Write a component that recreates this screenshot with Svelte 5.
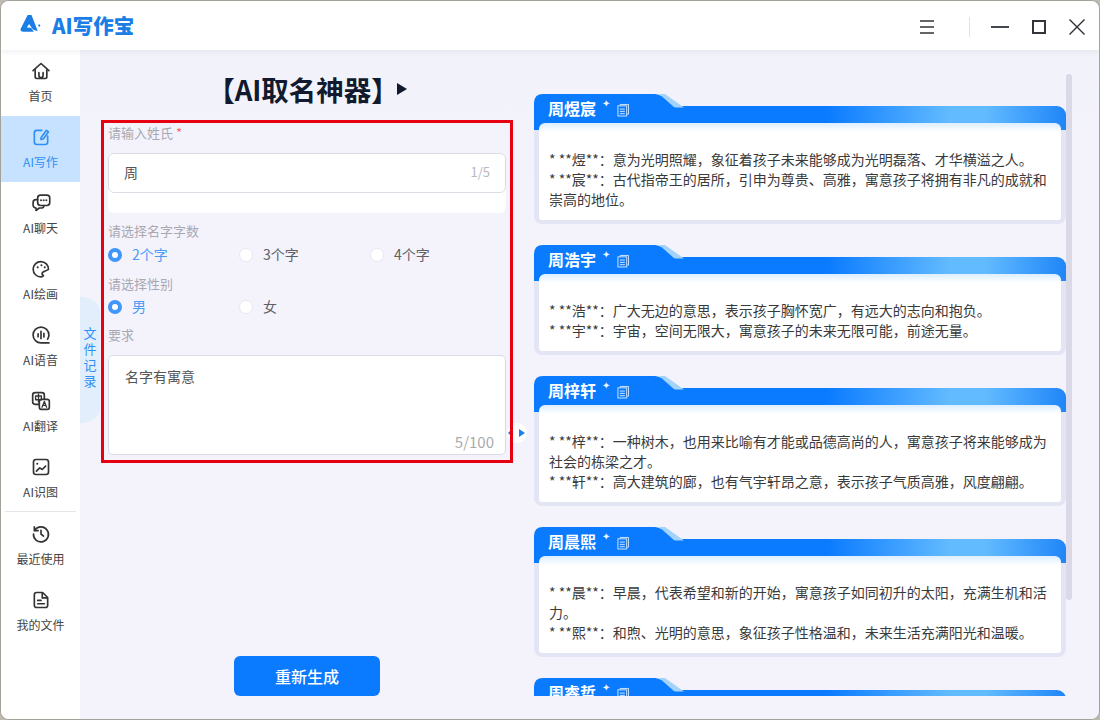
<script>
  const nav = [
    { id: 'home', label: '首页' },
    { id: 'edit', label: 'AI写作', active: true },
    { id: 'chat', label: 'AI聊天' },
    { id: 'paint', label: 'AI绘画' },
    { id: 'voice', label: 'AI语音' },
    { id: 'trans', label: 'AI翻译' },
    { id: 'image', label: 'AI识图' }
  ];
  const nav2 = [
    { id: 'history', label: '最近使用' },
    { id: 'file', label: '我的文件' }
  ];
  const counts = [
    { label: '2个字', on: true },
    { label: '3个字' },
    { label: '4个字' }
  ];
  const genders = [{ label: '男', on: true }, { label: '女' }];
  const cards = [
    { name: '周煜宸', lines: ['* **煜**：意为光明照耀，象征着孩子未来能够成为光明磊落、才华横溢之人。', '* **宸**：古代指帝王的居所，引申为尊贵、高雅，寓意孩子将拥有非凡的成就和崇高的地位。'] },
    { name: '周浩宇', lines: ['* **浩**：广大无边的意思，表示孩子胸怀宽广，有远大的志向和抱负。', '* **宇**：宇宙，空间无限大，寓意孩子的未来无限可能，前途无量。'] },
    { name: '周梓轩', lines: ['* **梓**：一种树木，也用来比喻有才能或品德高尚的人，寓意孩子将来能够成为社会的栋梁之才。', '* **轩**：高大建筑的廊，也有气宇轩昂之意，表示孩子气质高雅，风度翩翩。'] },
    { name: '周晨熙', lines: ['* **晨**：早晨，代表希望和新的开始，寓意孩子如同初升的太阳，充满生机和活力。', '* **熙**：和煦、光明的意思，象征孩子性格温和，未来生活充满阳光和温暖。'] },
    { name: '周睿哲', lines: ['* **睿**：聪明睿智，寓意孩子智慧过人。', '* **哲**：有智慧的人，寓意孩子明理通达。'] }
  ];
</script>

{#snippet icon(id)}
  <svg class="nav-icon" viewBox="0 0 24 24" fill="none" stroke="currentColor" stroke-width="2" stroke-linecap="round" stroke-linejoin="round">
    {#if id === 'home'}
      <path d="M2.500 11.500 12 3l9.500 8.500" />
      <path d="M5 10.500V19a2 2 0 0 0 2 2h10a2 2 0 0 0 2-2v-8.500" />
      <path d="M9.500 14v3.500a2.500 2.500 0 0 0 5 0V14" />
    {:else if id === 'edit'}
      <path d="M13 4H7a3 3 0 0 0-3 3v11a3 3 0 0 0 3 3h10a3 3 0 0 0 3-3v-7" />
      <path d="m12 13 6.500-9 2.500 1.800L15 14l-3 1z" />
    {:else if id === 'chat'}
      <rect x="8" y="2.500" width="14.500" height="12.500" rx="3.500" />
      <path d="M8 8H6a3.500 3.500 0 0 0-3.500 3.500v3A3.500 3.500 0 0 0 6 18v3l4-3h3a3 3 0 0 0 2.500-3" />
      <path d="M12 8.800h.01M15.200 8.800h.01M18.400 8.800h.01" stroke-width="2.400" />
    {:else if id === 'paint'}
      <path d="M21 12.500A9.200 9.200 0 1 0 12 21.500c1.500 0 2.500-.6 3-1.500-1.500-1-2.500-2.500-1-4 1.500-1.400 4.500-1.700 7-3.500z" />
      <path d="M8 10h.01M12.500 7.500h.01M16.500 10h.01" stroke-width="2.500" />
    {:else if id === 'voice'}
      <path d="M21.500 21.500H12A9.500 9.500 0 1 1 21.500 12c0 2-.6 3.500-1.500 5" />
      <path d="M8.500 10.500v3.500M12 7.500v9M15.500 10v4.500" />
    {:else if id === 'trans'}
      <rect x="2" y="2" width="14" height="14" rx="3" />
      <rect x="10" y="10" width="12" height="12" rx="2.500" fill="#fff" />
      <path d="M5.500 6h7v4.500h-7zM9 3.800v9.500" stroke-width="1.600" />
      <path d="m13.200 19.500 2.800-7 2.800 7M14.200 17.300h3.600" stroke-width="1.500" />
    {:else if id === 'image'}
      <rect x="3" y="3" width="18" height="18" rx="3" />
      <path d="m6.500 17 4-4 3 2 4-4" />
      <path d="M7.500 8h.01" stroke-width="2.500" />
    {:else if id === 'history'}
      <path d="M4.500 7.500A9 9 0 1 1 3 12" />
      <path d="M4 3.500v4.500h4.500" />
      <path d="M12 7.500V12l3 2.500" />
    {:else if id === 'file'}
      <path d="M14 3H6.500A2.500 2.500 0 0 0 4 5.500v13A2.500 2.500 0 0 0 6.500 21h11a2.500 2.500 0 0 0 2.500-2.500V9z" />
      <path d="M13.500 3.500V9.500H19.500" />
      <path d="M8 12.500h4M8 16.500h8" />
    {/if}
  </svg>
{/snippet}

{#snippet navItem(item)}
  <div class="nav-item" class:active={item.active}>
    {@render icon(item.id)}
    <span>{item.label}</span>
  </div>
{/snippet}

{#snippet radios(list)}
  <div class="radios">
    {#each list as r}
      <div class="radio" class:on={r.on}><i></i><span>{r.label}</span></div>
    {/each}
  </div>
{/snippet}

<div class="window">
  <header class="topbar">
    <div class="brand">
      <svg class="logo" viewBox="0 0 22 22">
        <path fill="#1a7ee6" d="M8 1h4l6.500 16.500c-2.500.5-4.500-.5-6-2.500L9.500 10.500 7 14.500c1.800-.8 3.600-.6 5 .5l2.500 3.500H3.500C1 18.500-.2 17 1 15z" />
        <path fill="#1a7ee6" d="M20 10.500l1.500 1.500-1.500 1.500-1-1.500z" />
      </svg>
      <span class="brand-name">AI写作宝</span>
    </div>
    <div class="win-ctrl">
      <svg class="ctl menu" viewBox="0 0 14 14" stroke="#333" stroke-width="1.500"><path d="M0 1h14M0 7h14M0 13h14" /></svg>
      <i class="sep"></i>
      <svg class="ctl min" viewBox="0 0 18 2" stroke="#44464f" stroke-width="2"><path d="M0 1h18" /></svg>
      <svg class="ctl max" viewBox="0 0 14 14" fill="none" stroke="#33353c" stroke-width="2"><rect x="1" y="1" width="12" height="12" /></svg>
      <svg class="ctl close" viewBox="0 0 16 16" stroke="#2c2e33" stroke-width="1.400"><path d="M0.500 0.500l15 15M15.500 0.500l-15 15" /></svg>
    </div>
  </header>

  <div class="content">
    <aside class="sidebar">
      {#each nav as item}{@render navItem(item)}{/each}
      <div class="divider"></div>
      {#each nav2 as item}{@render navItem(item)}{/each}
    </aside>

    <main class="main">
      <div class="file-tab"><span>文</span><span>件</span><span>记</span><span>录</span></div>

      <section class="left">
        <h1 class="title">【AI取名神器】<i class="tri"></i></h1>
        <div class="toggle"><i class="tl"></i><i class="tr"></i></div>
        <div class="form">
          <div class="label">请输入姓氏 <b>*</b></div>
          <div class="input-wrap">
            <div class="input"><span>周</span><em>1/5</em></div>
          </div>
          <div class="label l2">请选择名字字数</div>
          {@render radios(counts)}
          <div class="label l3">请选择性别</div>
          {@render radios(genders)}
          <div class="label l4">要求</div>
          <div class="textarea"><span>名字有寓意</span><em>5/100</em></div>
        </div>
        <button class="regen">重新生成</button>
      </section>

      <section class="results">
        {#each cards as c}
          <article class="card">
            <div class="head">
              <svg class="tab" viewBox="0 0 150 14">
                <path fill="#a3d3fb" d="M125 0h6l19 13.500h-11z" />
                <path fill="#0a7bff" d="M0 14V9q0-9 9-9h112q4 0 7 2.500L141 14z" />
              </svg>
              <span class="name">{c.name}</span>
              <span class="spark">✦</span>
              <svg class="doc" viewBox="0 0 13 14" fill="none" stroke="#d7ebff" stroke-width="1"><path d="M3.500 2.500V1h9v10.500H11" /><rect x="1" y="2.500" width="9.500" height="11" /><path d="M3 6h5.500M3 8.500h5.500M3 11h5.500" /></svg>
            </div>
            <div class="body">
              {#each c.lines as l}<p>{l}</p>{/each}
            </div>
          </article>
        {/each}
      </section>
      <div class="scrollbar"></div>
    </main>
  </div>
</div>

<style>
  :global(body) {
    margin: 0;
    background: #bdb9af;
    font-family: "Noto Sans CJK SC", "Noto Sans", sans-serif;
  }
  .window {
    width: 1100px;
    height: 720px;
    box-sizing: border-box;
    border: 1px solid #a2a29a;
    border-radius: 9px;
    overflow: hidden;
    display: flex;
    flex-direction: column;
    background: #f3f2fb;
  }
  .topbar {
    height: 49px;
    flex: none;
    display: flex;
    align-items: center;
    justify-content: space-between;
    background: #fff;
    box-shadow: 0 2px 5px rgba(60, 60, 90, 0.07);
    position: relative;
    z-index: 2;
  }
  .brand {
    display: flex;
    align-items: center;
    gap: 11px;
    padding-left: 19px;
  }
  .logo { width: 21px; height: 21px; margin-top: -3px; }
  .brand-name {
    font-size: 20.500px;
    font-weight: 900;
    color: #1a7ee6;
    margin-top: -1px;
  }
  .win-ctrl {
    display: flex;
    align-items: center;
    padding-right: 14px;
    margin-top: 3px;
  }
  .ctl { display: block; }
  .menu { width: 14px; height: 14px; margin-right: 35px; }
  .sep { width: 1px; height: 20px; background: #e2e2e6; margin-right: 21px; }
  .min { width: 18px; height: 2px; margin-right: 23px; }
  .max { width: 14px; height: 14px; margin-right: 23px; }
  .close { width: 16px; height: 16px; }

  .content { flex: 1; display: flex; min-height: 0; }
  .sidebar {
    width: 79px;
    flex: none;
    background: #fff;
    display: flex;
    flex-direction: column;
  }
  .nav-item {
    height: 66px;
    flex: none;
    display: flex;
    flex-direction: column;
    align-items: center;
    padding-top: 11px;
    box-sizing: border-box;
    color: #333;
    font-size: 12px;
    line-height: 18px;
  }
  .nav-item span { margin-top: 6px; color: #444; }
  .nav-item.active { background: #c6e2ff; color: #2e90f5; }
  .nav-item.active span { color: #2e90f5; }
  .nav-icon { width: 20px; height: 20px; }
  .divider {
    height: 1px;
    background: #e6e6ea;
    margin: -1px 4px 1px;
    flex: none;
  }

  .main {
    flex: 1;
    display: flex;
    position: relative;
    min-width: 0;
    padding-left: 21px;
    background: linear-gradient(180deg, #f2f2fa 0, #f4f3fc 120px);
  }
  .file-tab {
    position: absolute;
    left: 0;
    top: 247px;
    width: 20px;
    height: 126px;
    border-radius: 0 20px 20px 0 / 0 14px 14px 0;
    background: #e2eefb;
    display: flex;
    flex-direction: column;
    align-items: center;
    color: #2e90f5;
    font-size: 13px;
    line-height: 16px;
    padding-top: 28px;
    box-sizing: border-box;
  }

  .left {
    width: 412px;
    flex: none;
    display: flex;
    flex-direction: column;
    position: relative;
    padding-bottom: 23px;
    box-sizing: border-box;
  }
  .title {
    height: 70px;
    margin: 0;
    display: flex;
    align-items: center;
    justify-content: center;
    font-size: 27.500px;
    font-weight: 700;
    color: #111a2e;
    padding-top: 8px;
    box-sizing: border-box;
  }
  .tri {
    width: 0;
    height: 0;
    margin-left: -2px;
    border-left: 10px solid #111a2e;
    border-top: 6.500px solid transparent;
    border-bottom: 6.500px solid transparent;
  }
  .form {
    border: 3px solid #e60012;
    padding: 0 4px 5px;
    height: 343px;
    box-sizing: border-box;
    position: relative;
  }
  .label {
    font-size: 13px;
    line-height: 20px;
    color: #a8a8b2;
  }
  .label b { color: #f56c6c; font-weight: 400; }
  .l2 { margin-top: 8px; }
  .l3 { margin-top: 9px; }
  .l4 { margin-top: 8px; }
  .input-wrap {
    margin-top: 10px;
    height: 60px;
    background: #fff;
    border-radius: 6px;
  }
  .input {
    height: 40px;
    box-sizing: border-box;
    border: 1px solid #dcdce4;
    border-radius: 6px;
    display: flex;
    align-items: center;
    justify-content: space-between;
    padding: 0 15px;
    font-size: 14px;
    line-height: 20px;
    color: #555;
  }
  .input span, .input em { margin-top: -2px; }
  .input em {
    font-style: normal;
    font-size: 13px;
    color: #b8b8c0;
  }
  .radios {
    display: flex;
    margin-top: 4px;
    height: 20px;
  }
  .l3 + .radios { margin-top: 3px; }
  .radio {
    width: 131px;
    display: flex;
    align-items: center;
    gap: 10px;
    font-size: 14px;
    line-height: 20px;
    color: #606066;
  }
  .radio span { margin-top: -2px; }
  .radio i {
    width: 14px;
    height: 14px;
    box-sizing: border-box;
    border-radius: 50%;
    background: #fff;
    border: 1px solid #e8e8f0;
  }
  .radio.on { color: #4a9bf5; }
  .radio.on i { border: 4.500px solid #3f96fb; }
  .textarea {
    margin-top: 10px;
    height: 100px;
    box-sizing: border-box;
    background: #fff;
    border: 1px solid #dcdce8;
    border-radius: 5px;
    padding: 10px 16px;
    font-size: 14px;
    color: #555;
    position: relative;
    line-height: 20px;
  }
  .textarea em {
    position: absolute;
    right: 11px;
    bottom: 2px;
    font-style: normal;
    font-size: 15px;
    color: #aaa;
  }
  .toggle {
    position: absolute;
    left: 406px;
    top: 373px;
    width: 20px;
    height: 20px;
    border-radius: 50%;
    background: #fff;
    display: flex;
    align-items: center;
    justify-content: space-between;
    padding: 0 2px 0 1px;
    box-sizing: border-box;
  }
  .tl {
    width: 0; height: 0;
    border-right: 3px solid #1a80f0;
    border-top: 3px solid transparent;
    border-bottom: 3px solid transparent;
  }
  .tr {
    width: 0; height: 0;
    border-left: 6px solid #1a80f0;
    border-top: 4.500px solid transparent;
    border-bottom: 4.500px solid transparent;
  }
  .regen {
    margin: auto auto 0;
    width: 146px;
    height: 40px;
    border: 0;
    border-radius: 6px;
    background: #0a7bff;
    color: #fff;
    font: 500 16px "Noto Sans CJK SC", sans-serif;
  }

  .results {
    width: 532px;
    flex: none;
    margin: 24px 0 0 21px;
    padding-top: 20px;
    height: 622px;
    box-sizing: border-box;
    overflow: hidden;
    display: flex;
    flex-direction: column;
    gap: 21px;
  }
  .card {
    flex: none;
    border-radius: 0 0 8px 8px;
    overflow: hidden;
    background: linear-gradient(180deg, transparent 0, transparent 30px, #e3e4f4 30px);
  }
  .head {
    height: 36px;
    position: relative;
    display: flex;
    align-items: flex-start;
    padding: 3px 0 0 14px;
    box-sizing: border-box;
  }
  .head::before {
    content: "";
    position: absolute;
    inset: 12px 0 0 0;
    border-radius: 0 9px 0 0;
    background: linear-gradient(90deg, #0a7bff 0, #0a7bff 55%, #62baff 78%, #62baff 85%, #1f86f8 100%);
  }
  .tab {
    position: absolute;
    left: 0;
    top: 0;
    width: 150px;
    height: 14px;
  }
  .name {
    position: relative;
    color: #fff;
    font-size: 16px;
    font-weight: 700;
    line-height: 22px;
  }
  .spark {
    position: relative;
    color: #eef7ff;
    font-size: 10px;
    line-height: 12px;
    margin: 0 0 0 6px;
  }
  .doc {
    position: relative;
    width: 12px;
    height: 14px;
    margin: 6px 0 0 7px;
  }
  .body {
    margin: -7px 5px 4px;
    padding: 26px 9px 11px 10px;
    position: relative;
    border-radius: 6px 6px 3px 3px;
    background: linear-gradient(180deg, #dceeff 0, #fff 9px);
  }
  .body p {
    margin: 0;
    font-size: 14px;
    line-height: 20px;
    color: #3a3a3a;
  }
  .scrollbar {
    width: 6px;
    height: 526px;
    margin-top: 24px;
    background: #d9d9e8;
    border-radius: 3px;
    flex: none;
  }
</style>
